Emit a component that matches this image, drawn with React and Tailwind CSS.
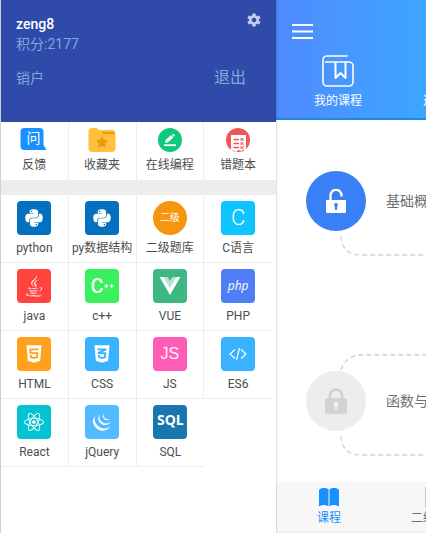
import { FaHtml5, FaCss3Alt, FaJava, FaPython } from 'react-icons/fa';
import { SiJquery, SiReact } from 'react-icons/si';
import { IoMdSettings } from 'react-icons/io';

const tools = [
    { name: '反馈', icon: <FeedbackIcon /> },
    { name: '收藏夹', icon: <FolderIcon /> },
    { name: '在线编程', icon: <EditIcon /> },
    { name: '错题本', icon: <MistakesIcon /> },
];

const subjects = [
    { name: 'python', tile: 'rounded bg-[#0470c0]', logo: <FaPython className="h-5 w-5" /> },
    { name: 'py数据结构', tile: 'rounded bg-[#0470c0]', logo: <FaPython className="h-5 w-5" /> },
    { name: '二级题库', tile: 'rounded-full bg-[#f6960f]', logo: <span className="text-[10px]">二级</span> },
    { name: 'C语言', tile: 'rounded bg-[#10c4ff]', logo: <CLogo /> },
    { name: 'java', tile: 'rounded bg-[#ff4440]', logo: <FaJava className="h-[22px] w-[22px]" /> },
    { name: 'c++', tile: 'rounded bg-[#3af05c]', logo: <CppLogo /> },
    { name: 'VUE', tile: 'rounded bg-[#3db883]', logo: <VueLogo /> },
    { name: 'PHP', tile: 'rounded bg-[#4f7df5]', logo: <span className="font-['Open_Sans',sans-serif] text-xs font-medium italic">php</span> },
    { name: 'HTML', tile: 'rounded bg-[#ffa11c]', logo: <FaHtml5 className="h-5 w-5" /> },
    { name: 'CSS', tile: 'rounded bg-[#39b2ff]', logo: <FaCss3Alt className="h-5 w-5" /> },
    { name: 'JS', tile: 'rounded bg-[#ff5cb8]', logo: <span className="font-['Liberation_Sans',sans-serif] text-base text-white/90">JS</span> },
    { name: 'ES6', tile: 'rounded bg-[#39b2ff]', logo: <CodeLogo /> },
    { name: 'React', tile: 'rounded bg-[#05c3d3]', logo: <SiReact className="h-5 w-5" /> },
    { name: 'jQuery', tile: 'rounded bg-[#52bbff]', logo: <SiJquery className="h-[18px] w-[18px]" /> },
    { name: 'SQL', tile: 'rounded bg-[#1976ae]', logo: <span className="pb-1 font-['Open_Sans',sans-serif] text-sm font-bold">SQL</span> },
];

function FeedbackIcon() {
    return (
        <span className="relative flex h-6 w-7 items-center pb-1 pl-1.5 text-white">
            <svg viewBox="0 0 27 24" className="absolute inset-0 h-6 w-7" fill="#1890ff">
                <path d="M4 0h15a4 4 0 0 1 4 4v13l3 5H4a4 4 0 0 1-4-4V4a4 4 0 0 1 4-4z" />
            </svg>
            <span className="relative text-sm leading-5">问</span>
        </span>
    );
}

function FolderIcon() {
    return (
        <svg viewBox="0 0 27 24" className="h-6 w-7">
            <path d="M0 4a4 4 0 0 1 4-4h4l3 2h12a4 4 0 0 1 4 4v14a4 4 0 0 1-4 4H4a4 4 0 0 1-4-4z" fill="#ffc03d" />
            <path d="M13 4h11c1 0 2 .6 2.500 2H16c-1.500 0-2-1-3-2z" fill="#e8990c" />
            <path d="M13.500 9.200l1.600 3.200 3.600.5-2.600 2.500.6 3.500-3.200-1.600-3.200 1.600.6-3.500-2.600-2.500 3.600-.5z" fill="#e8990c" stroke="#e8990c" strokeLinejoin="round" />
        </svg>
    );
}

function EditIcon() {
    return (
        <svg viewBox="0 0 24 24" className="h-6 w-6">
            <circle cx="12" cy="12" r="12" fill="#0bca7f" />
            <path d="M7 15l.8-3.200 5.400-4.700 2.200 2.300-5.400 4.900zM14 6.400l1-.9 2.200 2.300-1 .9z" fill="#fff" />
            <path d="M6 17.200h12" stroke="#fff" strokeWidth="1.800" />
        </svg>
    );
}

function MistakesIcon() {
    return (
        <svg viewBox="0 0 24 24" className="h-6 w-6">
            <circle cx="12" cy="12" r="12" fill="#f1545a" />
            <path d="M5 7h15v15.500l-2.500-1-2.500 1.500-2.500-1L10 24l-2.500-1.500L5 22.500z" fill="#fff" />
            <path d="M7.500 11.500H13M7.500 15.500H13M7.500 19.500H13M14.500 10.500l3 2M17.500 10.500l-3 2M14.500 14.500l3 2M17.500 14.500l-3 2M14.500 18.500l3 2M17.500 18.500l-3 2" stroke="#f1545a" strokeWidth="1.300" />
        </svg>
    );
}

function CLogo() {
    return <span className="font-[Roboto,sans-serif] text-[22px] font-light">C</span>;
}

function CppLogo() {
    return (
        <span className="flex items-center">
            <span className="text-xl font-medium">C</span>
            <svg viewBox="0 0 10 6" className="h-1.5 w-2.5" stroke="currentColor" strokeWidth="1.200">
                <path d="M.2 3h4.200M2.300 .8v4.400M5.600 3h4.200M7.700 .8v4.400" />
            </svg>
        </span>
    );
}

function VueLogo() {
    return (
        <svg viewBox="0 0 22 19" className="h-[18px] w-[22px]">
            <path d="M0 0h4.500L11 11.200 17.500 0H22L11 19z" fill="#fff" />
            <path d="M4.500 0h4L11 4.200 13.500 0h4L11 11.200z" fill="#b9e5d1" />
        </svg>
    );
}

function CodeLogo() {
    return (
        <svg viewBox="0 0 18 12" className="h-3 w-[18px]" fill="none" stroke="#fff" strokeWidth="1.200">
            <path d="M6 1.500L1 6l5 4.500M12 1.500L17 6l-5 4.500M10.500 0l-3 12" />
        </svg>
    );
}

function CourseIcon() {
    return (
        <svg viewBox="0 0 32 32" className="h-8 w-8" fill="none" stroke="#fff" strokeWidth="1.600" strokeLinecap="round" strokeLinejoin="round">
            <path d="M25 1H5a4 4 0 0 0-4 4v22a4 4 0 0 0 4 4h22a4 4 0 0 0 4-4V11a4 4 0 0 0-4-4H3.500" />
            <path d="M13.500 7.500V23l5-5 5 5V7.500" strokeWidth="2" />
        </svg>
    );
}

function LockIcon({ open }) {
    return open ? (
        <svg viewBox="0 0 20 24" className="h-6 w-5">
            <path d="M4.500 12V6.500a5.500 5.500 0 0 1 11-.3V7.500" fill="none" stroke="#fff" strokeWidth="2.400" />
            <rect x="0" y="11" width="20" height="13" rx="1" fill="#fff" />
            <path d="M10 14a2 2 0 0 1 1 3.700V21H9v-3.300A2 2 0 0 1 10 14z" fill="#397ff5" />
        </svg>
    ) : (
        <svg viewBox="0 0 22 26" className="h-[26px] w-[22px]">
            <path d="M5 12V7.500a6 6 0 0 1 12 0V12" fill="none" stroke="#d2d2d2" strokeWidth="2.800" />
            <rect x="0" y="10" width="22" height="16" rx="2.500" fill="#d2d2d2" />
            <path d="M11 13.500a2.600 2.600 0 0 1 1.300 4.800V22H9.700v-3.700A2.600 2.600 0 0 1 11 13.500z" fill="#ededed" />
        </svg>
    );
}

function BookIcon() {
    return (
        <svg viewBox="0 0 20 19" className="h-5 w-5" fill="currentColor">
            <path d="M0 2.500C2 .2 7 0 9.500 1.800V19C7 17 3 17 0 19zM20 2.500C18 .2 13 0 10.500 1.800V19C13 17 17 17 20 19z" />
        </svg>
    );
}

function Connector({ up }) {
    return (
        <svg viewBox="0 0 200 22" className="ml-16 block h-[22px] w-[200px]" fill="none" stroke="#d0d0d0" strokeWidth="1.300" strokeDasharray="5 3">
            {up ? <path d="M1 16C4 7 11 1 21 1h179" /> : <path d="M1 1C1 13 9 20 21 20h179" />}
        </svg>
    );
}

export default function App() {
    return (
        <div className="flex h-screen overflow-hidden bg-white font-[Roboto,'Noto_Sans_CJK_SC',sans-serif] text-xs text-[#4d4d4d]">
            {/* Side menu */}
            <aside className="z-10 w-[276px] shrink-0 border-l border-[#d0d0d0] bg-white shadow-[0_0_2px_rgba(0,0,0,0.35)]">
                <header className="h-[122px] bg-[#2f4aa9] pt-3 pr-3.5 pl-[15px] text-[#7caadb]">
                    <div className="flex items-start justify-between">
                        <h1 className="pt-0.5 text-sm leading-5 font-medium text-white">zeng8</h1>
                        <button type="button" aria-label="设置" className="text-[#c3cbea]">
                            <IoMdSettings className="h-4 w-4" />
                        </button>
                    </div>
                    <p className="text-sm leading-5">积分:2177</p>
                    <div className="flex items-center justify-between pt-3 pr-4">
                        <button type="button" className="text-sm leading-6">销户</button>
                        <button type="button" className="text-base leading-6">退出</button>
                    </div>
                </header>

                <nav className="grid grid-cols-4 border-b-[14px] border-[#ededed] pr-1">
                    {tools.map((tool) => (
                        <a key={tool.name} href="#" className="flex h-[58px] flex-col items-center gap-[5px] border-r border-[#ededed] pt-1.5 last:border-r-0">
                            {tool.icon}
                            <span className="leading-4">{tool.name}</span>
                        </a>
                    ))}
                </nav>

                <nav className="grid grid-cols-4 border-t border-[#ededed] pr-1">
                    {subjects.map((subject) => (
                        <a key={subject.name} href="#" className="flex h-[68px] flex-col items-center gap-[5px] border-r border-b border-[#ededed] pt-1.5 nth-[4n]:border-r-0 last:border-r-0">
                            <span className={`flex h-[34px] w-[34px] items-center justify-center leading-none text-white ${subject.tile}`}>
                                {subject.logo}
                            </span>
                            <span className="leading-4 whitespace-nowrap">{subject.name}</span>
                        </a>
                    ))}
                </nav>
            </aside>

            {/* Course page, pushed partly out of view by the menu */}
            <main className="flex min-w-0 flex-1 flex-col overflow-hidden">
                <header className="h-[120px] shrink-0 border-b-2 border-[#1e88e5] bg-linear-to-r from-[#4f8aff] to-[#3ba6ff] text-white">
                    <button type="button" aria-label="菜单" className="mt-6 ml-4 block">
                        <svg viewBox="0 0 21 15" className="h-[15px] w-[21px]" stroke="#fff" strokeWidth="2">
                            <path d="M0 1h21M0 7.500h21M0 14h21" />
                        </svg>
                    </button>
                    <nav className="flex pt-4">
                        <a href="#" className="flex w-[124px] shrink-0 flex-col items-center gap-1">
                            <CourseIcon />
                            <span className="leading-5">我的课程</span>
                        </a>
                        <a href="#" className="ml-[23px] flex shrink-0 items-end leading-5 whitespace-nowrap">选择课程</a>
                    </nav>
                </header>

                <section className="flex-1 overflow-hidden pt-[51px] text-sm text-[#707070]">
                    <a href="#" className="flex items-center gap-5 pl-[30px] whitespace-nowrap">
                        <span className="flex h-[60px] w-[60px] shrink-0 items-center justify-center rounded-full bg-[#397ff5]">
                            <LockIcon open />
                        </span>
                        基础概念
                    </a>
                    <div className="pt-1">
                        <Connector />
                    </div>
                    <div className="pt-[97px]">
                        <Connector up />
                    </div>
                    <a href="#" className="-mt-[5px] flex items-center gap-5 pl-[30px] whitespace-nowrap">
                        <span className="flex h-[60px] w-[60px] shrink-0 items-center justify-center rounded-full bg-[#ededed]">
                            <LockIcon />
                        </span>
                        函数与模块
                    </a>
                    <div className="pt-1">
                        <Connector />
                    </div>
                </section>

                <nav className="flex h-[51px] shrink-0 border-b-2 border-[#f0f0f0] bg-[#f7f7f7] text-[#707070]">
                    <a href="#" className="flex w-[106px] shrink-0 flex-col items-center gap-[3px] pt-[5px] text-[#1890ff]">
                        <BookIcon />
                        <span className="leading-4">课程</span>
                    </a>
                    <a href="#" className="flex w-[106px] shrink-0 flex-col items-center gap-[3px] pt-[5px]">
                        <svg viewBox="0 0 20 20" className="h-5 w-5" fill="none" stroke="#c8c8c8" strokeWidth="2">
                            <rect x="1" y="1" width="18" height="18" />
                        </svg>
                        <span className="leading-4">二级题库</span>
                    </a>
                </nav>
            </main>
        </div>
    );
}
